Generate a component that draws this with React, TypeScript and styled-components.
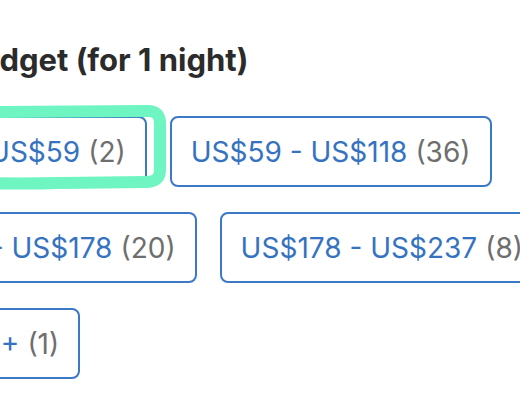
import React from 'react'
import styled, { createGlobalStyle } from 'styled-components'

const GlobalStyle = createGlobalStyle`
body {
  margin: 0;
  background: #ffffff;
  overflow: hidden;
  font-family: Inter, "Noto Sans", sans-serif;
}
`

type Range = { label: string; count: number }

const ranges: Range[] = [
    { label: 'US$0 - US$59', count: 2 },
    { label: 'US$59 - US$118', count: 36 },
    { label: 'US$118 - US$178', count: 20 },
    { label: 'US$178 - US$237', count: 8 },
    { label: 'US$237 +', count: 1 },
]

function App() {
    return (
        <Page>
            <GlobalStyle />
            <Filter>
                <Title>Your budget (for 1 night)</Title>
                <ChipList>
                    {ranges.map(r => (
                        <Chip key={r.label}>
                            <Price>{r.label}</Price>
                            <Count>({r.count})</Count>
                        </Chip>
                    ))}
                </ChipList>
            </Filter>
            {/* hand drawn highlight around the first option */}
            <Highlight width="520" height="400" viewBox="0 0 520 400">
                <path
                    d="M -20 112 L 148 111 Q 160 111 160 123 L 160 170 Q 160 182 146 182 L 60 183 Q 20 184 -20 183"
                    fill="none"
                    stroke="#6ff5c2"
                    strokeWidth="12"
                    strokeLinejoin="round"
                />
            </Highlight>
        </Page>
    )
}

const Page = styled.div`
position: relative;
width: 520px;
height: 400px;
overflow: hidden;
`
const Filter = styled.div`
display: flex;
flex-direction: column;
gap: 36px;
width: 800px;
margin-left: -135px;
padding-top: 40px;
`
const Title = styled.h3`
margin: 0;
padding-left: 18px;
font-size: 31px;
font-weight: 700;
line-height: 40px;
color: #2b2b2b;
`
const ChipList = styled.div`
display: flex;
flex-wrap: wrap;
column-gap: 23px;
row-gap: 25px;
`
const Chip = styled.button`
display: flex;
align-items: center;
gap: 8px;
box-sizing: border-box;
height: 71px;
padding: 0 19px;
border: 2px solid #3b78c6;
border-radius: 8px;
background: #ffffff;
font-family: inherit;
font-size: 28px;
cursor: pointer;
`
const Price = styled.span`
color: #3573c0;
`
const Count = styled.span`
color: #6e6e6e;
`
const Highlight = styled.svg`
position: absolute;
left: 0;
top: 0;
pointer-events: none;
`

export default App
